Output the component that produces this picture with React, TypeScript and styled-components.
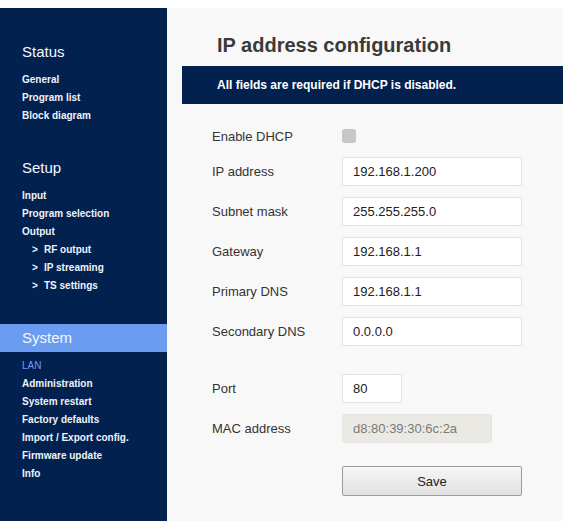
import React, { useState } from "react";
import styled, { createGlobalStyle } from "styled-components";

const GlobalStyle = createGlobalStyle`
  html, body {
    margin: 0;
    padding: 0;
    background: #ffffff;
  }
  body {
    padding-top: 8px;
    font-family: "Liberation Sans", Arial, sans-serif;
  }
`;

const Layout = styled.div`
  display: flex;
  min-height: calc(100vh - 8px);
`;

const Sidebar = styled.nav`
  width: 167px;
  flex-shrink: 0;
  background: #02214f;
  padding-top: 30px;
  box-sizing: border-box;
`;

const Section = styled.div`
  margin-bottom: 29px;
`;

const SectionTitle = styled.div<{ $active?: boolean }>`
  height: 28px;
  line-height: 28px;
  padding-left: 22px;
  font-size: 15px;
  color: #f4f7ff;
  background: ${(p) => (p.$active ? "#6b9cf0" : "transparent")};
`;

const MenuList = styled.ul`
  list-style: none;
  margin: 0;
  padding: 5px 0 0 0;
`;

const MenuItem = styled.li<{ $active?: boolean; $sub?: boolean }>`
  height: 18px;
  line-height: 18px;
  padding-left: ${(p) => (p.$sub ? "32px" : "22px")};
  font-size: 10px;
  color: ${(p) => (p.$active ? "#6b9cf0" : "#eef3fb")};
  font-weight: ${(p) => (p.$active ? "normal" : "bold")};
  cursor: pointer;
`;

const Arrow = styled.span`
  display: inline-block;
  width: 12px;
`;

const Main = styled.main`
  flex: 1;
  background: #f9f8f9;
  padding-top: 25px;
`;

const Title = styled.h1`
  margin: 0;
  padding-left: 50px;
  font-size: 20px;
  line-height: 24px;
  font-weight: bold;
  color: #3a3a3a;
`;

const Banner = styled.div`
  margin: 9px 0 0 15px;
  height: 38px;
  line-height: 38px;
  padding-left: 35px;
  background: #02214f;
  color: #ffffff;
  font-size: 12px;
  font-weight: bold;
`;

const Form = styled.form`
  padding: 18px 0 0 45px;
`;

const Row = styled.div<{ $top?: number; $height?: number }>`
  display: flex;
  align-items: center;
  margin-top: ${(p) => p.$top ?? 11}px;
  height: ${(p) => p.$height ?? 29}px;
`;

const Label = styled.label`
  width: 130px;
  flex-shrink: 0;
  font-size: 13px;
  color: #333333;
`;

const TextInput = styled.input<{ $width?: number }>`
  box-sizing: border-box;
  width: ${(p) => p.$width ?? 180}px;
  height: 29px;
  padding: 0 0 0 10px;
  border: 1px solid #e2e2e2;
  border-radius: 3px;
  background: #ffffff;
  font-family: "Liberation Sans", Arial, sans-serif;
  font-size: 13px;
  color: #222222;
  outline: none;

  &:read-only {
    background: #ebe9e3;
    border-color: #e6e4de;
    color: #7a7a7a;
  }
`;

const Checkbox = styled.input`
  appearance: none;
  margin: 0;
  width: 14px;
  height: 14px;
  border-radius: 3px;
  background: #c6c6c6;
  cursor: pointer;

  &:checked {
    background: #6b9cf0;
  }
`;

const SaveButton = styled.button`
  margin-left: 130px;
  width: 180px;
  height: 30px;
  border: 1px solid #9c9c9c;
  border-radius: 2px;
  background: linear-gradient(#f6f6f6, #e1e1e1);
  font-family: "Liberation Sans", Arial, sans-serif;
  font-size: 13px;
  color: #222222;
  cursor: pointer;
`;

const menu = [
  {
    title: "Status",
    items: [{ label: "General" }, { label: "Program list" }, { label: "Block diagram" }],
  },
  {
    title: "Setup",
    items: [
      { label: "Input" },
      { label: "Program selection" },
      { label: "Output" },
      { label: "RF output", sub: true },
      { label: "IP streaming", sub: true },
      { label: "TS settings", sub: true },
    ],
  },
  {
    title: "System",
    active: true,
    items: [
      { label: "LAN", active: true },
      { label: "Administration" },
      { label: "System restart" },
      { label: "Factory defaults" },
      { label: "Import / Export config." },
      { label: "Firmware update" },
      { label: "Info" },
    ],
  },
];

const fields = [
  { label: "IP address", value: "192.168.1.200" },
  { label: "Subnet mask", value: "255.255.255.0" },
  { label: "Gateway", value: "192.168.1.1" },
  { label: "Primary DNS", value: "192.168.1.1" },
  { label: "Secondary DNS", value: "0.0.0.0" },
];

const App: React.FC = () => {
  const [dhcp, setDhcp] = useState(false);

  return (
    <>
      <GlobalStyle />
      <Layout>
        <Sidebar>
          {menu.map((section) => (
            <Section key={section.title}>
              <SectionTitle $active={section.active}>{section.title}</SectionTitle>
              <MenuList>
                {section.items.map((item: { label: string; sub?: boolean; active?: boolean }) => (
                  <MenuItem key={item.label} $sub={item.sub} $active={item.active}>
                    {item.sub && <Arrow>&gt;</Arrow>}
                    {item.label}
                  </MenuItem>
                ))}
              </MenuList>
            </Section>
          ))}
        </Sidebar>
        <Main>
          <Title>IP address configuration</Title>
          <Banner>All fields are required if DHCP is disabled.</Banner>
          <Form onSubmit={(e) => e.preventDefault()}>
            <Row $top={0} $height={28}>
              <Label>Enable DHCP</Label>
              <Checkbox type="checkbox" checked={dhcp} onChange={() => setDhcp(!dhcp)} />
            </Row>
            {fields.map((f, i) => (
              <Row key={f.label} $top={i === 0 ? 7 : 11}>
                <Label>{f.label}</Label>
                <TextInput defaultValue={f.value} />
              </Row>
            ))}
            <Row $top={28}>
              <Label>Port</Label>
              <TextInput $width={60} defaultValue="80" />
            </Row>
            <Row>
              <Label>MAC address</Label>
              <TextInput $width={150} value="d8:80:39:30:6c:2a" readOnly />
            </Row>
            <Row $top={23} $height={30}>
              <SaveButton type="submit">Save</SaveButton>
            </Row>
          </Form>
        </Main>
      </Layout>
    </>
  );
};

export default App;
